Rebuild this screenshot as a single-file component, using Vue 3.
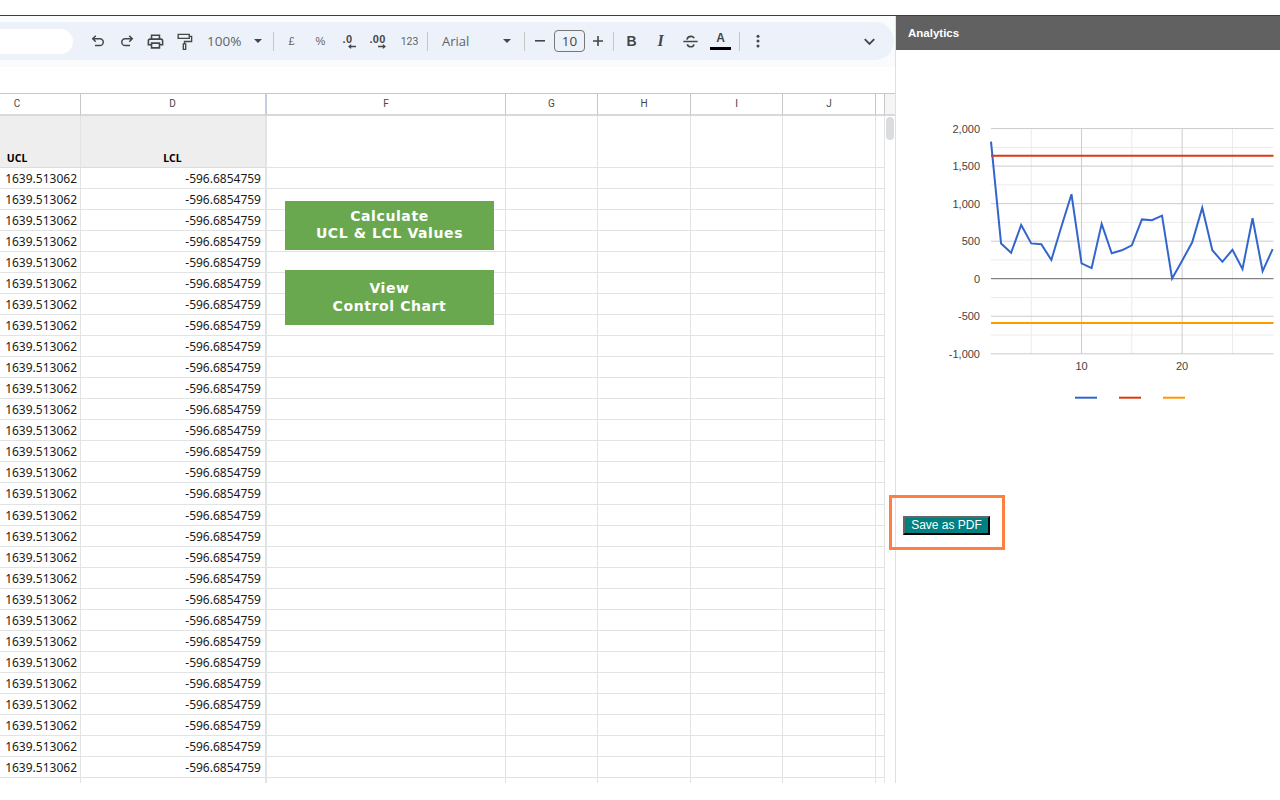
<script setup>
const cols = [
  { name: "C", cls: "c" },
  { name: "D", cls: "d" },
  { name: "F", cls: "f" },
  { name: "G", cls: "g" },
  { name: "H", cls: "h" },
  { name: "I", cls: "i" },
  { name: "J", cls: "j" },
  { name: "", cls: "x" },
];
const rowCount = 29;

// values read off the chart
const series = [
  1825, 470, 345, 715, 470, 458, 250, 695, 1125, 205, 142, 730, 338, 378, 445,
  790, 780, 840, 2, 240, 485, 945, 380, 225, 385, 130, 805, 100, 395,
];

// chart svg sits at x=896, y=50 on the page
const X0 = 95;
const XSTEP = 10.06;
const Y0 = 228.7;
const YSCALE = 0.07507;
const XEND = 377.5;
const xAt = (n) => X0 + (n - 1) * XSTEP;
const yAt = (v) => Y0 - v * YSCALE;

const line = series.map((v, i) => `${xAt(i + 1)},${yAt(v)}`).join(" ");
const majorY = [2000, 1500, 1000, 500, -500, -1000];
const minorY = [1750, 1250, 750, 250, -250, -750];
const labelsY = [2000, 1500, 1000, 500, 0, -500, -1000];
const fmt = (v) => v.toLocaleString("en-US");
</script>

<template>
  <div class="page">
    <div class="top-strip"></div>
    <div class="main">
      <div class="sheet">
        <div class="bar-wrap">
          <div class="toolbar">
            <div class="search"></div>
            <button class="tb first">
              <svg viewBox="0 0 24 24" width="18" height="18" class="ic"><path d="M9 5 5 9l4 4M5 9h9.5a4.5 4.5 0 0 1 0 9H8" /></svg>
            </button>
            <button class="tb">
              <svg viewBox="0 0 24 24" width="18" height="18" class="ic"><path d="M15 5l4 4-4 4M19 9H9.5a4.500 4.500 0 0 0 0 9H16" /></svg>
            </button>
            <button class="tb">
              <svg viewBox="0 0 24 24" width="19" height="19" class="fill"><path d="M19 8h-1V3H6v5H5c-1.660 0-3 1.340-3 3v6h4v4h12v-4h4v-6c0-1.660-1.340-3-3-3zM8 5h8v3H8V5zm8 14H8v-4h8v4zm4-4h-2v-2H6v2H4v-4c0-.55.45-1 1-1h14c.55 0 1 .45 1 1v4z" /></svg>
            </button>
            <button class="tb">
              <svg viewBox="0 0 24 24" width="19" height="19" class="ic thin"><path d="M4 3h14v5H4zM18 5.500h3V12h-9v3M10.500 15h3v7h-3z" /></svg>
            </button>
            <div class="zoom">
              <span>100%</span>
              <i class="caret"></i>
            </div>
            <div class="sep"></div>
            <button class="tb small">£</button>
            <button class="tb small pct">%</button>
            <button class="tb dec">
              <span>.0</span>
              <svg viewBox="0 0 10 6" width="8" height="5" class="fill"><path d="M4 0v2h6v2H4v2L0 3z" /></svg>
            </button>
            <button class="tb dec">
              <span>.00</span>
              <svg viewBox="0 0 10 6" width="8" height="5" class="fill"><path d="M6 0v2H0v2h6v2l4-3z" /></svg>
            </button>
            <button class="tb num">123</button>
            <div class="sep"></div>
            <div class="font-pick">
              <span>Arial</span>
              <i class="caret"></i>
            </div>
            <div class="sep"></div>
            <button class="tb step">
              <svg viewBox="0 0 12 12" width="12" height="12" class="fill"><path d="M1 5h10v1.600H1z" /></svg>
            </button>
            <div class="size">10</div>
            <button class="tb plus">
              <svg viewBox="0 0 12 12" width="12" height="12" class="fill"><path d="M5.200 1h1.600v4.200H11v1.600H6.800V11H5.200V6.800H1V5.200h4.200z" /></svg>
            </button>
            <div class="sep"></div>
            <button class="tb bold">B</button>
            <button class="tb ital">I</button>
            <button class="tb">
              <svg viewBox="0 0 24 24" width="19" height="19" class="ic"><path d="M3 12h18M7.500 9.500C8 6.500 10 5.500 12.500 5.500c2 0 3.500.8 4 2.500M8 15.500c.5 2.200 2 3.200 4 3.200s4-1 4.300-3.200" /></svg>
            </button>
            <button class="tb color">
              <span>A</span>
              <i></i>
            </button>
            <div class="sep"></div>
            <button class="tb more">
              <svg viewBox="0 0 24 24" width="18" height="18" class="fill"><circle cx="12" cy="5.500" r="2" /><circle cx="12" cy="12" r="2" /><circle cx="12" cy="18.500" r="2" /></svg>
            </button>
            <button class="tb chev">
              <svg viewBox="0 0 24 24" width="19" height="19" class="ic wide"><path d="M6 9l6 6 6-6" /></svg>
            </button>
          </div>
        </div>
        <div class="formula"></div>

        <div class="grid-row">
          <div class="grid">
            <div class="row head">
              <div v-for="col in cols" :key="col.cls" class="cell" :class="col.cls">{{ col.name }}</div>
            </div>
            <div class="row title">
              <div class="cell c gray">UCL</div>
              <div class="cell d gray">LCL</div>
              <div class="cell f"></div>
              <div class="cell g"></div>
              <div class="cell h"></div>
              <div class="cell i"></div>
              <div class="cell j"></div>
              <div class="cell x"></div>
            </div>
            <div v-for="n in rowCount" :key="n" class="row body">
              <div class="cell c">1639.513062</div>
              <div class="cell d">-596.6854759</div>
              <div class="cell f"></div>
              <div class="cell g"></div>
              <div class="cell h"></div>
              <div class="cell i"></div>
              <div class="cell j"></div>
              <div class="cell x"></div>
            </div>
            <div class="row body">
              <div class="cell c"></div>
              <div class="cell d"></div>
              <div class="cell f"></div>
              <div class="cell g"></div>
              <div class="cell h"></div>
              <div class="cell i"></div>
              <div class="cell j"></div>
              <div class="cell x"></div>
            </div>
            <div class="green one">Calculate<br />UCL &amp; LCL Values</div>
            <div class="green two">View<br />Control Chart</div>
          </div>
          <div class="scroll">
            <div class="scroll-head"></div>
            <div class="thumb"></div>
          </div>
        </div>
      </div>

      <aside class="panel">
        <div class="panel-head">Analytics</div>
        <svg class="chart" width="384" height="380">
          <line v-for="v in minorY" :key="v" :x1="X0" :x2="XEND" :y1="yAt(v)" :y2="yAt(v)" stroke="#ebebeb" />
          <line v-for="n in [5, 15, 25]" :key="n" :x1="xAt(n)" :x2="xAt(n)" :y1="yAt(2000)" :y2="yAt(-1000)" stroke="#ebebeb" />
          <line v-for="n in [10, 20]" :key="n" :x1="xAt(n)" :x2="xAt(n)" :y1="yAt(2000)" :y2="yAt(-1000)" stroke="#cccccc" />
          <line v-for="v in majorY" :key="v" :x1="X0" :x2="XEND" :y1="yAt(v)" :y2="yAt(v)" stroke="#cccccc" />
          <line :x1="X0" :x2="XEND" :y1="yAt(0)" :y2="yAt(0)" stroke="#666666" />
          <polyline :points="line" fill="none" stroke="#3366cc" stroke-width="2" />
          <line :x1="X0" :x2="XEND" y1="105.700" y2="105.700" stroke="#dc3912" stroke-width="2" />
          <line :x1="X0" :x2="XEND" y1="273" y2="273" stroke="#ff9900" stroke-width="2" />
          <text v-for="v in labelsY" :key="v" x="84" :y="yAt(v) + 4" text-anchor="end" class="axis">{{ fmt(v) }}</text>
          <text :x="xAt(10)" y="320" text-anchor="middle" class="axis">10</text>
          <text :x="xAt(20)" y="320" text-anchor="middle" class="axis">20</text>
          <line x1="179" x2="201" y1="347.700" y2="347.700" stroke="#3366cc" stroke-width="2" />
          <line x1="223" x2="245" y1="347.700" y2="347.700" stroke="#dc3912" stroke-width="2" />
          <line x1="267" x2="289" y1="347.700" y2="347.700" stroke="#ff9900" stroke-width="2" />
        </svg>
        <button class="pdf">Save as PDF</button>
        <div class="callout"></div>
      </aside>
    </div>
  </div>
</template>

<style scoped>
.page {
  width: 1280px;
  height: 800px;
  background: #fff;
  overflow: hidden;
  font-family: "Liberation Sans", Arial, sans-serif;
}
.top-strip {
  height: 15px;
  border-bottom: 1px solid #3c3c3c;
  box-sizing: content-box;
}
.main {
  display: flex;
  height: 767px;
}
.sheet {
  width: 895px;
  flex: none;
  overflow: hidden;
}
.bar-wrap {
  height: 51px;
  padding-top: 6px;
  box-sizing: border-box;
  background: #f9fbfd;
}
.toolbar {
  height: 38px;
  width: 894px;
  background: #edf2fa;
  border-radius: 0 19px 19px 0;
  display: flex;
  align-items: center;
  color: #444746;
}
.search {
  width: 73px;
  height: 25px;
  background: #fff;
  border-radius: 0 13px 13px 0;
  flex: none;
}
.tb {
  width: 29px;
  height: 28px;
  flex: none;
  border: 0;
  padding: 0;
  background: none;
  color: #444746;
  display: flex;
  align-items: center;
  justify-content: center;
  font-family: "Liberation Sans", Arial, sans-serif;
}
.tb.first {
  margin-left: 10px;
}
.ic {
  fill: none;
  stroke: #444746;
  stroke-width: 2;
}
.ic.thin {
  stroke-width: 1.700;
}
.ic.wide {
  stroke-width: 2.400;
}
.fill {
  fill: #444746;
}
.zoom {
  width: 66px;
  padding-left: 8px;
  box-sizing: border-box;
  display: flex;
  align-items: center;
  justify-content: space-between;
  font: 13.500px "Open Sans", sans-serif;
  color: #5f6368;
  padding-right: 3px;
  margin-right: 8px;
  flex: none;
}
.caret {
  width: 0;
  height: 0;
  border-left: 4px solid transparent;
  border-right: 4px solid transparent;
  border-top: 4px solid #444746;
}
.sep {
  width: 1px;
  height: 19px;
  background: #c7c7c7;
  flex: none;
}
.small {
  font-size: 11px;
  font-weight: 400;
  color: #5f6368;
  margin-left: 3px;
  margin-right: -3px;
}
.small.pct {
  margin-left: 3px;
}
.dec {
  flex-direction: column;
  font-size: 11px;
  font-weight: 700;
  line-height: 11px;
  letter-spacing: 0.300px;
  margin-left: 1px;
}
.dec svg {
  margin-top: -1px;
  margin-left: 8px;
}
.num {
  font: 10.500px Roboto, sans-serif;
  color: #5f6368;
  margin-left: 3px;
  margin-right: 3px;
}
.font-pick {
  width: 96px;
  padding: 0 13px 0 14px;
  box-sizing: border-box;
  display: flex;
  align-items: center;
  justify-content: space-between;
  font: 13px "Open Sans", sans-serif;
  color: #5f6368;
  flex: none;
}
.plus {
  width: 26px;
  margin-right: 2px;
}
.size {
  width: 31px;
  height: 22px;
  box-sizing: border-box;
  border: 1px solid #747775;
  border-radius: 4px;
  text-align: center;
  font: 13.500px/20px "Open Sans", sans-serif;
  color: #444746;
  flex: none;
}
.bold {
  font-size: 14px;
  font-weight: 700;
  margin-left: 3px;
}
.ital {
  font: italic 700 16px "Liberation Serif", serif;
  margin-right: 1px;
}
.color {
  flex-direction: column;
  font-size: 12px;
  font-weight: 700;
  line-height: 13px;
  margin-left: 1px;
  margin-right: 4px;
}
.color i {
  display: block;
  width: 21px;
  height: 3px;
  background: #000;
  margin-top: 2px;
}
.more {
  margin-left: 3px;
}
.chev {
  margin-left: 83px;
}
.formula {
  height: 26px;
}
.grid-row {
  display: flex;
  height: 690px;
  overflow: hidden;
}
.grid {
  width: 885px;
  flex: none;
  position: relative;
  overflow: hidden;
}
.row {
  display: flex;
  margin-left: -46px;
  width: 931px;
}
.cell {
  flex: none;
  box-sizing: border-box;
  border-right: 1px solid #e2e3e3;
  border-bottom: 1px solid #e2e3e3;
  font: 12px "Noto Sans", sans-serif;
  color: #1a1a1a;
  white-space: nowrap;
  overflow: hidden;
}
.c { width: 127px; }
.d { width: 186px; border-right-width: 2px; }
.f { width: 239px; }
.g { width: 92px; }
.h { width: 93px; }
.i { width: 92px; }
.j { width: 93px; }
.x { width: 9px; }
.head {
  height: 23px;
}
.head .cell {
  height: 23px;
  border-top: 1px solid #c7c7c7;
  border-bottom: 2px solid #d9d9d9;
  border-right-color: #c7c7c7;
  text-align: center;
  font: 10px/20px Roboto, sans-serif;
  color: #444746;
}
.head .cell.d {
  border-right-color: #c3cfde;
  padding-right: 1px;
}
.title {
  height: 52px;
}
.title .cell {
  height: 52px;
}
.gray {
  background: #eeeeee;
  display: flex;
  align-items: flex-end;
  justify-content: center;
  font-size: 10.500px;
  font-weight: 700;
  color: #000;
  line-height: 18px;
  border-bottom-color: #dcdcdc;
}
.title .gray.d {
  padding-right: 1px;
}
.body {
  height: 21.040px;
}
.body .cell {
  height: 100%;
  line-height: 21px;
}
.body .c {
  text-align: right;
  padding-right: 3px;
}
.body .d {
  text-align: right;
  padding-right: 4px;
}
.green {
  position: absolute;
  left: 285px;
  width: 209px;
  background: #6aa84f;
  color: #fff;
  text-align: center;
  font: 700 14px "DejaVu Sans", sans-serif;
  letter-spacing: 0.600px;
  display: flex;
  align-items: center;
  justify-content: center;
  flex-direction: column;
  box-sizing: border-box;
}
.green.one {
  top: 108px;
  height: 49px;
  line-height: 17px;
  padding-bottom: 1px;
}
.green.two {
  top: 177px;
  height: 55px;
  line-height: 18px;
  padding-bottom: 2px;
}
.scroll {
  width: 10px;
  flex: none;
}
.scroll-head {
  height: 23px;
  box-sizing: border-box;
  background: #f5f5f5;
  border-top: 1px solid #c7c7c7;
  border-bottom: 2px solid #d9d9d9;
}
.thumb {
  width: 8px;
  height: 23px;
  margin: 1px 0 0 1px;
  background: #dadce0;
  border-radius: 4px;
}
.panel {
  flex: 1;
  border-left: 1px solid #e0e0e0;
  position: relative;
}
.panel-head {
  height: 34px;
  background: #616161;
  color: #fff;
  font: 700 11.500px/35px "Liberation Sans", sans-serif;
  padding-left: 12px;
}
.chart {
  display: block;
}
.axis {
  font: 11px "Liberation Sans", Arial, sans-serif;
  fill: #444444;
}
.pdf {
  display: block;
  margin: 86px 0 0 7px;
  width: 87px;
  height: 19px;
  padding: 0;
  box-sizing: border-box;
  background: #008080;
  color: #fff;
  border: 2px solid;
  border-color: #666 #000 #000 #666;
  font: 12px/15px "Liberation Sans", Arial, sans-serif;
}
.callout {
  position: absolute;
  left: -7px;
  top: 479px;
  width: 116px;
  height: 55px;
  box-sizing: border-box;
  border: 3px solid #ff7f3f;
}
</style>

<style>
html,
body {
  margin: 0;
  background: #fff;
}
</style>
